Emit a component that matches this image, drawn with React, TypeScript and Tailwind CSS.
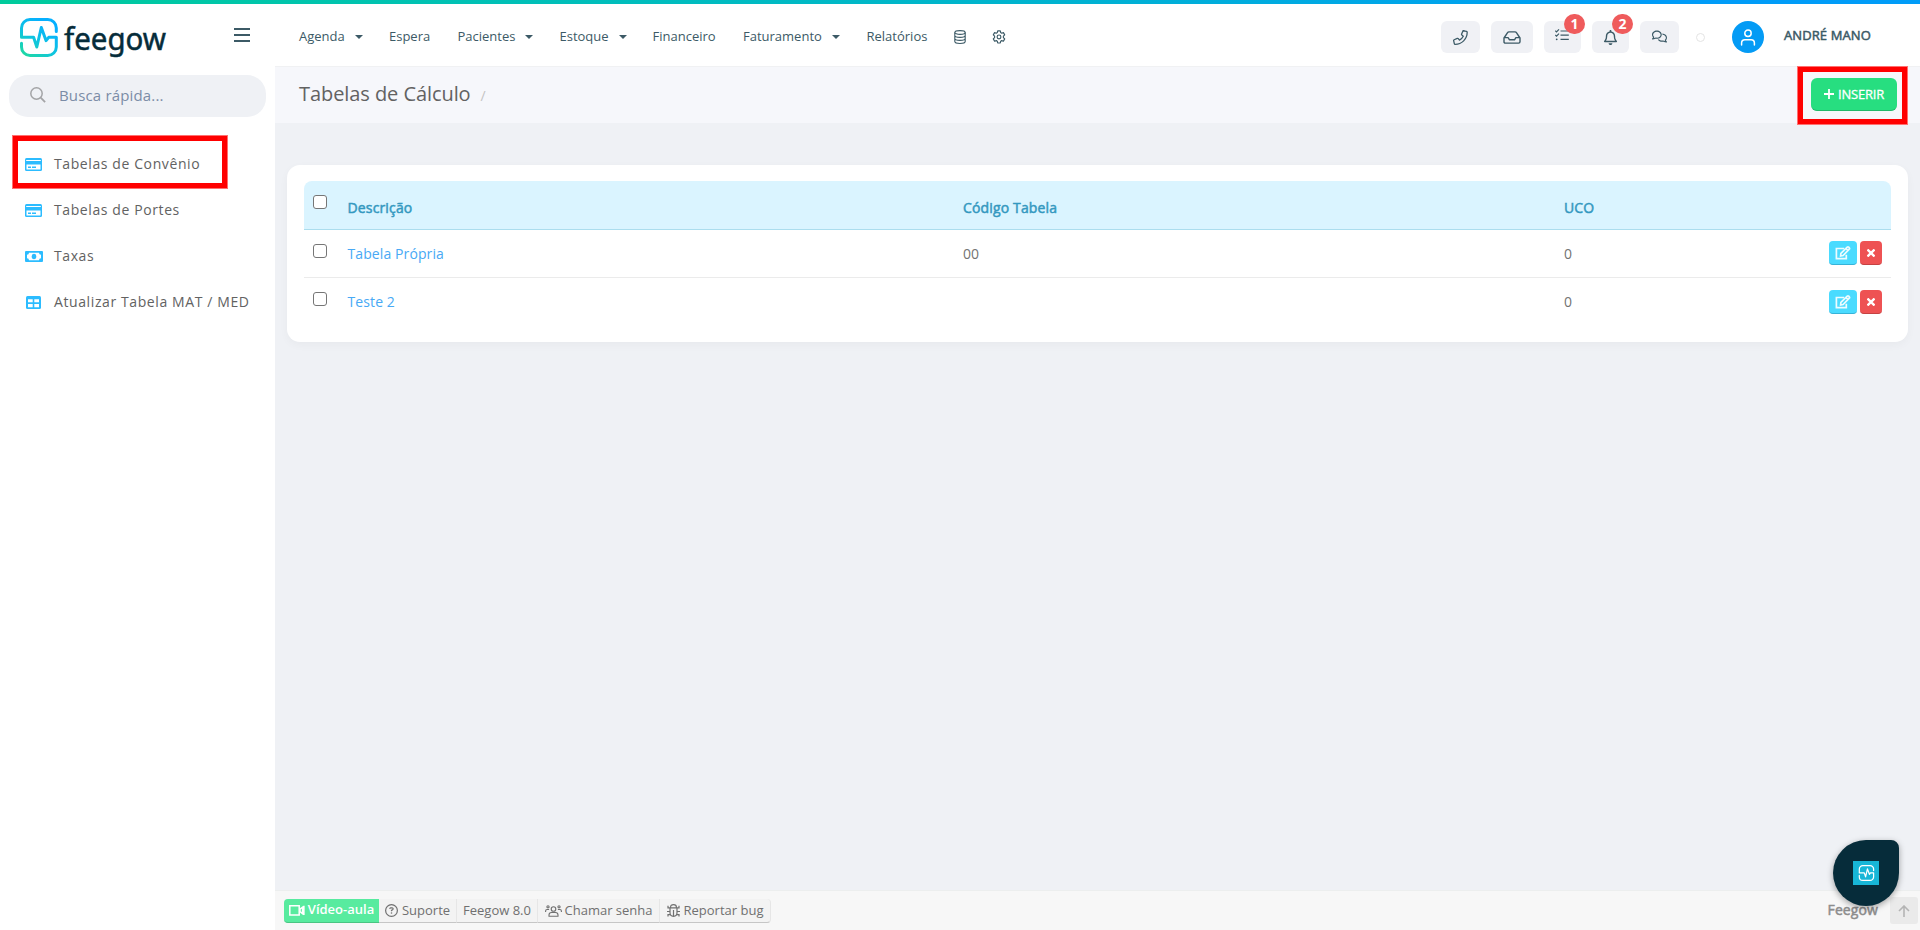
import React from "react";
import { FaRegBell, FaRegCircleQuestion, FaRegComments } from "react-icons/fa6";

const fontStack = "font-['Open_Sans',sans-serif]";

const PulseMark = ({ className, stroke, width = 3 }: { className: string; stroke: string; width?: number }) => (
  <svg viewBox="0 0 38 39" className={className} fill="none" stroke={stroke} strokeWidth={width} strokeLinejoin="round">
    <defs>
      <linearGradient id="mark" gradientUnits="userSpaceOnUse" x1="4" y1="37" x2="26" y2="6">
        <stop offset="0" stopColor="#1fd8a4" />
        <stop offset="0.5" stopColor="#0fc4e0" />
        <stop offset="1" stopColor="#06b0ff" />
      </linearGradient>
    </defs>
    <path
      strokeLinecap="round"
      d="M36.3 13.5V10a8.5 8.5 0 0 0-8.5-8.5H10A8.5 8.5 0 0 0 1.5 10v9.3H13.600l3.200 9.700L21.300 9.500l4.800 13.200 2.600-3.400h7.600V29a8.500 8.500 0 0 1-8.500 8.500H10A8.500 8.500 0 0 1 1.500 29v-3.700"
    />
  </svg>
);

const CardIcon = () => (
  <svg viewBox="0 0 17 13" className="h-[13px] w-[17px]">
    <rect width="17" height="13" rx="1.5" fill="#2cbcff" />
    <path d="M1.200 2.500h14.600" stroke="#fff" strokeWidth="1" />
    <path d="M1.500 6.500h14v5h-14z" fill="#fff" />
    <path d="M3 9.200h3M7 9.200h4" stroke="#2cbcff" strokeWidth="1.600" />
  </svg>
);

const MoneyIcon = () => (
  <svg viewBox="0 0 18 11" className="h-[11px] w-[18px]">
    <rect width="18" height="11" rx="1" fill="#2cbcff" />
    <path d="M4 1.700h10a2 2 0 0 0 2 2v3.600a2 2 0 0 0-2 2H4a2 2 0 0 0-2-2V3.700a2 2 0 0 0 2-2z" fill="#fff" />
    <ellipse cx="9" cy="5.500" rx="2.300" ry="2.700" fill="#2cbcff" />
  </svg>
);

const TableIcon = () => (
  <svg viewBox="0 0 15 13" className="h-[13px] w-[15px]">
    <rect width="15" height="13" rx="1.500" fill="#2cbcff" />
    <path d="M2 3.300h4.700v3H2zM8.300 3.300H13v3H8.300zM2 8h4.700v3.300H2zM8.300 8H13v3.300H8.300z" fill="#fff" />
  </svg>
);

const PhoneIcon = () => (
  <svg viewBox="0 0 512 512" className="size-[15px]" fill="none" stroke="currentColor" strokeWidth="44" strokeLinejoin="round">
    <path d="M364 26l100 23c14 3 24 15 24 29 0 227-184 410-410 410-14 0-26-10-29-24L26 364c-3-14 4-28 17-34l108-46c12-5 26-2 34 8l40 49c56-28 102-74 130-130l-49-40c-10-8-13-22-8-34l46-108c6-13 20-20 34-17z" transform="translate(-4 2)" />
  </svg>
);

const InboxIcon = () => (
  <svg viewBox="0 0 18 13" className="h-[13px] w-[18px]" fill="none" stroke="currentColor" strokeWidth="1.400" strokeLinejoin="round">
    <path d="M1 7l3.400-5.200Q5 .900 6 .900h6q1 0 1.600.900L17 7v3.700q0 1.400-1.400 1.400H2.400Q1 12.100 1 10.700zM1.200 6.600h3.900l1.400 2.200h5l1.400-2.200h3.900" />
  </svg>
);

const TasksIcon = () => (
  <svg viewBox="0 0 14 12" className="h-3 w-3.5" fill="none" stroke="currentColor" strokeWidth="1.200">
    <path d="M5.500 2h8.300M5.500 6.200h8.300M5.500 10.300h8.300M.3 1.700l1.200 1.200L4 .4M.3 5.900l1.200 1.200L4 4.600" />
    <circle cx="1.700" cy="10.300" r=".9" fill="currentColor" stroke="none" />
  </svg>
);

const DatabaseIcon = () => (
  <svg viewBox="0 0 12 14" className="h-3.5 w-3" fill="none" stroke="currentColor" strokeWidth="1.100">
    <ellipse cx="6" cy="2.500" rx="5.200" ry="1.900" />
    <path d="M.8 2.500v9c0 2.600 10.400 2.600 10.400 0v-9M.8 5.500c0 2.500 10.400 2.500 10.400 0M.8 8.500c0 2.500 10.400 2.500 10.400 0" />
  </svg>
);

const GearIcon = () => (
  <svg viewBox="0 0 14 14" className="size-3.5" fill="none" stroke="currentColor" strokeWidth="1.150" strokeLinejoin="round">
    <path d="M5.700.9h2.600l.4 1.700 1 .6 1.700-.6 1.300 2.300L11.400 6.100v1.500l1.300 1.300-1.300 2.300-1.700-.6-1 .6-.4 1.800H5.700l-.4-1.800-1-.6-1.700.6L1.300 8.900l1.300-1.300V6.100L1.300 4.900l1.300-2.300 1.700.6 1-.6z" />
    <circle cx="7" cy="6.900" r="1.900" />
  </svg>
);

const EditIcon = () => (
  <svg viewBox="0 0 16 14" className="h-3.5 w-4" fill="none" stroke="#fff" strokeOpacity="0.9" strokeWidth="1.700">
    <path d="M9.200 2.500H1.400v10.100h9.900V8.800" />
    <path d="M5.600 10l.3-2.700 6.300-6.100q.8-.6 1.500 0l.6.600q.6.700 0 1.400L8.100 9.500zM11 2.600l2 2" />
  </svg>
);

const VideoIcon = () => (
  <svg viewBox="0 0 16 11" className="h-[11px] w-4" fill="none" stroke="#fff" strokeWidth="1.500">
    <path d="M.8.800h9.400v9.200H.8z" />
    <path d="M11 4.200l2.600-2v6.500L11 6.700zM14.900.8v9.300" />
  </svg>
);

const UsersIcon = () => (
  <svg viewBox="0 0 17 12" className="h-3 w-[17px]" fill="none" stroke="currentColor" strokeWidth="1.100">
    <circle cx="8.500" cy="4" r="2.300" />
    <circle cx="3" cy="1.800" r="1.100" />
    <circle cx="14" cy="1.800" r="1.100" />
    <path d="M4 11.300V10q0-2.500 2.500-2.500h4q2.500 0 2.500 2.500v1.300zM.6 7V6q0-1.500 1.500-1.500h2M16.400 7V6q0-1.500-1.500-1.500h-2" />
  </svg>
);

const BugIcon = () => (
  <svg viewBox="0 0 13 13" className="size-[13px]" fill="none" stroke="currentColor" strokeWidth="1.200">
    <path d="M3.600 3.600V3q0-2.300 2.900-2.300T9.400 3v.600M1 1.800v2h11v-2M3 3.800v5a3.500 3.500 0 0 0 7 0v-5M6.500 6v6M0 7.500h3M10 7.500h3M1 12.500V10.600h2.300M12 12.500v-1.900H9.700" />
  </svg>
);

const navItems = [
  { label: "Agenda", width: "w-[90px]", menu: true },
  { label: "Espera", width: "w-[68.500px]" },
  { label: "Pacientes", width: "w-[102px]", menu: true },
  { label: "Estoque", width: "w-[93px]", menu: true },
  { label: "Financeiro", width: "w-[90.500px]" },
  { label: "Faturamento", width: "w-[123.500px]", menu: true },
  { label: "Relatórios", width: "w-[87.500px]" },
];

const sideItems = [
  { label: "Tabelas de Convênio", icon: <CardIcon /> },
  { label: "Tabelas de Portes", icon: <CardIcon /> },
  { label: "Taxas", icon: <MoneyIcon /> },
  { label: "Atualizar Tabela MAT / MED", icon: <TableIcon /> },
];

const rows = [
  { name: "Tabela Própria", code: "00", uco: "0" },
  { name: "Teste 2", code: "", uco: "0" },
];

const CheckBox = () => (
  <input type="checkbox" className="block size-3.5 appearance-none rounded-[3px] border border-[#767676] bg-white" />
);

const Badge = ({ value }: { value: string }) => (
  <span className="absolute -top-[7px] -right-1 flex h-5 w-[21px] items-center justify-center rounded-full bg-[#ef5b5c] text-sm font-bold text-white">
    {value}
  </span>
);

const Sidebar = () => (
  <aside className="w-[275px] shrink-0 bg-white">
    <div className="flex h-[71px] items-start pt-3.5 pl-5">
      <PulseMark className="h-[39px] w-[38px]" stroke="url(#mark)" />
      <svg width="110" height="50" className="ml-1.5 overflow-visible">
        <text
          x="0"
          y="32"
          textLength="102"
          lengthAdjust="spacingAndGlyphs"
          className="fill-[#062c3a] stroke-[#062c3a] font-['Noto_Sans',sans-serif] text-[31px] leading-none font-normal"
          strokeWidth="0.5"
        >
          feegow
        </text>
      </svg>
      <button className="mt-2.5 ml-[60px] flex w-4 flex-col gap-1 text-[#3c5a66]">
        <span className="h-0.5 bg-current" />
        <span className="h-0.5 bg-current" />
        <span className="h-0.5 bg-current" />
      </button>
    </div>
    <div className="mx-[9px] flex h-[42px] items-center rounded-[19px] bg-[#eff1f5] pl-[21px]">
      <svg viewBox="0 0 16 16" className="mb-[3px] size-4" fill="none" stroke="#a3a4a6" strokeWidth="1.500">
        <circle cx="6.500" cy="6.500" r="5.700" />
        <path d="M10.700 10.700l4.400 4.400" strokeWidth="1.800" />
      </svg>
      <span className="ml-[13px] pb-0.5 text-[15px] tracking-[0.16px] text-[#7b8ca6]">Busca rápida...</span>
    </div>
    <ul className="mt-6">
      {sideItems.map((item) => (
        <li key={item.label} className="flex h-[46px] items-center">
          <span className="ml-[23px] flex w-[21px] justify-center">{item.icon}</span>
          <span className="ml-2.5 text-sm tracking-[0.6px] whitespace-nowrap text-[#626262]">{item.label}</span>
        </li>
      ))}
    </ul>
  </aside>
);

const Header = () => (
  <header className="flex h-[62px] items-center justify-between bg-white pt-1 pl-6 text-[#3c5a66]">
    <nav className="flex items-center pb-px text-[13px]">
      {navItems.map((item) => (
        <a key={item.label} className={`flex items-center whitespace-nowrap ${item.width}`}>
          {item.label}
          {item.menu && (
            <span className="ml-2.5 border-x-4 border-t-4 border-x-transparent border-t-current" />
          )}
        </a>
      ))}
      <span className="w-[37.500px]">
        <DatabaseIcon />
      </span>
      <GearIcon />
    </nav>
    <div className="flex h-8 items-center pr-12">
      <button className="mr-[11px] flex h-8 w-[39px] items-center justify-center rounded-md bg-[#f0f1f5]">
        <PhoneIcon />
      </button>
      <button className="mr-[11px] flex h-8 w-[42px] items-center justify-center rounded-md bg-[#f0f1f5]">
        <InboxIcon />
      </button>
      <button className="relative mr-[11px] flex h-8 w-[37px] items-center justify-center rounded-md bg-[#f0f1f5] pr-px pb-1">
        <TasksIcon />
        <Badge value="1" />
      </button>
      <button className="relative mr-[11px] flex h-8 w-[37px] items-center justify-center rounded-md bg-[#f0f1f5]">
        <FaRegBell className="size-[15px]" />
        <Badge value="2" />
      </button>
      <button className="mr-[17px] flex h-8 w-[39px] items-center justify-center rounded-md bg-[#f0f1f5]">
        <FaRegComments className="mb-0.5 size-[15px]" />
      </button>
      <span className="mr-[27px] size-[9px] rounded-full border border-[#e4e4e4]" />
      <span className="mr-5 flex size-8 items-center justify-center rounded-full bg-[#049bf5]">
        <svg viewBox="0 0 16 17" className="h-[17px] w-4" fill="none" stroke="#fff" strokeWidth="1.500">
          <circle cx="8" cy="4.200" r="3.200" />
          <path d="M1.600 16v-2q0-3.300 3.300-3.300h6.200q3.300 0 3.300 3.300v2" strokeLinecap="round" />
        </svg>
      </span>
      <span className="w-[88px] pb-0.5 text-[13px] tracking-[0.1px] whitespace-nowrap [-webkit-text-stroke:0.5px]">
        ANDRÉ MANO
      </span>
    </div>
  </header>
);

const TitleBar = () => (
  <div className="flex h-[57px] items-center justify-between border-t border-[#f0f1f3] bg-[#f6f7fb] pr-[23px] pl-6">
    <h1 className="flex items-center pb-0.5 text-xl tracking-[-0.07px] text-[#626262]">
      Tabelas de Cálculo
      <span className="mt-1 ml-2.5 text-sm text-[#c4c4c4]">/</span>
    </h1>
    <button className="mb-px flex h-[33px] w-[86px] items-center justify-center rounded-md border-b border-[#22b86a] bg-[#27de80] text-[13px] tracking-[-0.2px] text-white [-webkit-text-stroke:0.3px]">
      <svg viewBox="0 0 10 10" className="mr-1 size-2.5" stroke="#fff" strokeWidth="1.800">
        <path d="M5 0v10M0 5h10" />
      </svg>
      <span className="pt-px">INSERIR</span>
    </button>
  </div>
);

const CalcTable = () => (
  <section className="mr-3 ml-3 h-[177px] rounded-[13px] bg-white px-[17px] pt-4 shadow-[0_3px_10px_rgba(0,0,0,0.035)]">
    <div className="flex h-[49px] rounded-t-lg border-b border-[#abddee] bg-[#daf4ff] pt-3.5 text-sm tracking-[0.15px] text-[#3498c0] [-webkit-text-stroke:0.5px]">
      <div className="w-[43.500px] pl-[9px]">
        <CheckBox />
      </div>
      <div className="w-[615.500px] pt-[3px]">Descrição</div>
      <div className="w-[601px] pt-[3px]">Código Tabela</div>
      <div className="pt-[3px]">UCO</div>
    </div>
    {rows.map((row, i) => (
      <div
        key={row.name}
        className={`flex h-12 pt-3.5 text-sm text-[#737373] ${i === 0 ? "border-b border-[#ebebeb]" : ""}`}
      >
        <div className="w-[43.500px] pl-[9px]">
          <CheckBox />
        </div>
        <a className="w-[615.500px] tracking-[0.1px] text-[#48a9f5]">{row.name}</a>
        <div className="w-[601px]">{row.code}</div>
        <div>{row.uco}</div>
        <div className={`mr-[9px] ml-auto flex gap-[3px] ${i === 0 ? "-mt-[3px]" : "-mt-0.5"}`}>
          <button className="flex h-6 w-7 items-center justify-center rounded-[4px] border-b border-[#36b3d8] bg-[#4adbff]">
            <EditIcon />
          </button>
          <button className="flex h-6 w-[22px] items-center justify-center rounded-[4px] border-b border-[#c54242] bg-[#ee5253]">
            <svg viewBox="0 0 8 8" className="size-2" stroke="#fff" strokeWidth="2.300">
              <path d="M.500.500l7 7M7.500.500l-7 7" />
            </svg>
          </button>
        </div>
      </div>
    ))}
  </section>
);

const Footer = () => (
  <footer className="flex h-10 items-center justify-between border-t border-[#eceeee] bg-[#f7f7f7] pl-[9px] text-[13px] text-[#707070]">
    <div className="flex h-6 whitespace-nowrap">
      <button className="flex w-[95px] items-center justify-center gap-[3px] rounded-l-[4px] border-b border-[#4ac582] bg-[#58eb9f] font-semibold text-white">
        <VideoIcon />
        Vídeo-aula
      </button>
      <button className="flex w-[78px] items-center justify-center gap-1 border-r border-b border-r-[#e6e6e6] border-b-[#c6c6c6] bg-[#f3f3f3] pt-px">
        <FaRegCircleQuestion className="size-[13px]" />
        Suporte
      </button>
      <button className="w-[81px] border-r border-b border-r-[#e6e6e6] border-b-[#c6c6c6] bg-[#f3f3f3] pt-px">
        Feegow 8.0
      </button>
      <button className="flex w-[122px] items-center justify-center gap-[3px] border-r border-b border-r-[#e6e6e6] border-b-[#c6c6c6] bg-[#f3f3f3] pt-px">
        <UsersIcon />
        Chamar senha
      </button>
      <button className="flex w-[111px] items-center justify-center gap-1 rounded-r-[4px] border-r border-b border-r-[#e6e6e6] border-b-[#c6c6c6] bg-[#f3f3f3] pt-px">
        <BugIcon />
        Reportar bug
      </button>
    </div>
    <div className="flex items-center">
      <span className="mr-3 pb-0.5 text-sm tracking-[0.1px] text-[#8d8d8d] [-webkit-text-stroke:0.5px]">Feegow</span>
      <button className="mr-0.5 flex h-[27px] w-7 items-center justify-center rounded-[3px] bg-[#eaeaea]">
        <svg viewBox="0 0 12 12" className="size-3" fill="none" stroke="#b4b4b4" strokeWidth="1.600">
          <path d="M6 12V1M1 6l5-5 5 5" />
        </svg>
      </button>
    </div>
  </footer>
);

export default function App() {
  return (
    <div className={`relative flex h-[930px] w-[1920px] flex-col overflow-hidden bg-[#eff1f5] ${fontStack}`}>
      <div className="h-1 shrink-0 bg-linear-to-r from-[#00cb9c] via-[#00b3d0] via-55% to-[#009cf8] to-85%" />
      <div className="flex flex-1">
        <Sidebar />
        <main className="flex flex-1 flex-col">
          <Header />
          <TitleBar />
          <div className="flex-1 pt-[42px]">
            <CalcTable />
          </div>
          <Footer />
        </main>
      </div>

      {/* Highlight frames */}
      <div className="absolute top-[135px] left-3 h-[54px] w-[216px] border-[6px] border-[#ff0000] outline -outline-offset-1 outline-[#ff7070]" />
      <div className="absolute top-[66px] left-[1797px] h-[59px] w-[111px] border-[6px] border-[#ff0000] outline -outline-offset-1 outline-[#ff7070]" />

      {/* Chat bubble */}
      <div className="absolute top-[840px] left-[1833px] flex size-[66px] items-center justify-center rounded-[33px] rounded-tr-[8px] bg-[#062c3a] shadow-[0_2px_6px_rgba(0,0,0,0.35)]">
        <div className="flex h-6 w-[26px] items-center justify-center bg-[#17b6d7]">
          <PulseMark className="h-4 w-[17px]" stroke="#fff" />
        </div>
      </div>
    </div>
  );
}
